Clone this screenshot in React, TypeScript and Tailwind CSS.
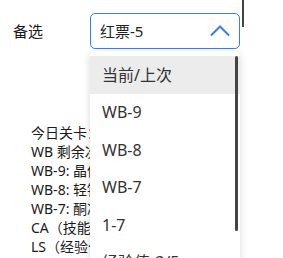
import React from "react";

const options = ["当前/上次", "WB-9", "WB-8", "WB-7", "1-7", "经验值-3/5"];

const lines = [
  "今日关卡：WB-9 / WB-8",
  "WB 剩余次数：3",
  "WB-9: 晶体电路",
  "WB-8: 轻锰矿",
  "WB-7: 酮凝集",
  "CA（技能概要）",
  "LS（经验作战记录）",
];

const App = () => {
  return (
    <div
      className="relative w-[283px] h-[258px] overflow-hidden bg-white text-[#1a1a1a]"
      style={{ fontFamily: '"Noto Sans", "Noto Sans CJK SC", sans-serif' }}
    >
      <div className="absolute left-[242px] top-0 w-[2px] h-[27px] bg-[#444]" />

      <div className="flex items-center pt-[13px]">
        <span className="w-[90px] pl-[13px] text-[15px]">备选</span>
        <div className="flex items-center justify-between w-[150px] h-[36px] rounded-[5px] border border-[#3b7cf6] pl-[9px] pr-[9px]">
          <span className="text-[15px] text-[#222]">红票-5</span>
          <svg width="20" height="12" viewBox="0 0 20 12">
            <polyline
              points="1,10.5 10,1.5 19,10.5"
              fill="none"
              stroke="#3b7cf6"
              strokeWidth="2"
            />
          </svg>
        </div>
      </div>

      <div className="pl-[31px] pt-[74px] text-[14px] leading-[19px]">
        {lines.map((l) => (
          <div key={l} className="whitespace-nowrap">
            {l}
          </div>
        ))}
      </div>

      <div className="absolute left-[90px] top-[51px] w-[150px] h-[240px] bg-white rounded-[5px] shadow-[0_2px_8px_rgba(0,0,0,0.15)] pt-[5px]">
        {options.map((o, i) => (
          <div
            key={o}
            className={`flex items-center h-[37.5px] pl-[12px] text-[16px] text-[#333] ${
              i === 0 ? "bg-[#ececec]" : ""
            }`}
          >
            {o}
          </div>
        ))}
        <div className="absolute right-[2px] top-[5px] w-[3px] h-[175px] rounded-full bg-[#444]" />
      </div>
    </div>
  );
};

export default App;
